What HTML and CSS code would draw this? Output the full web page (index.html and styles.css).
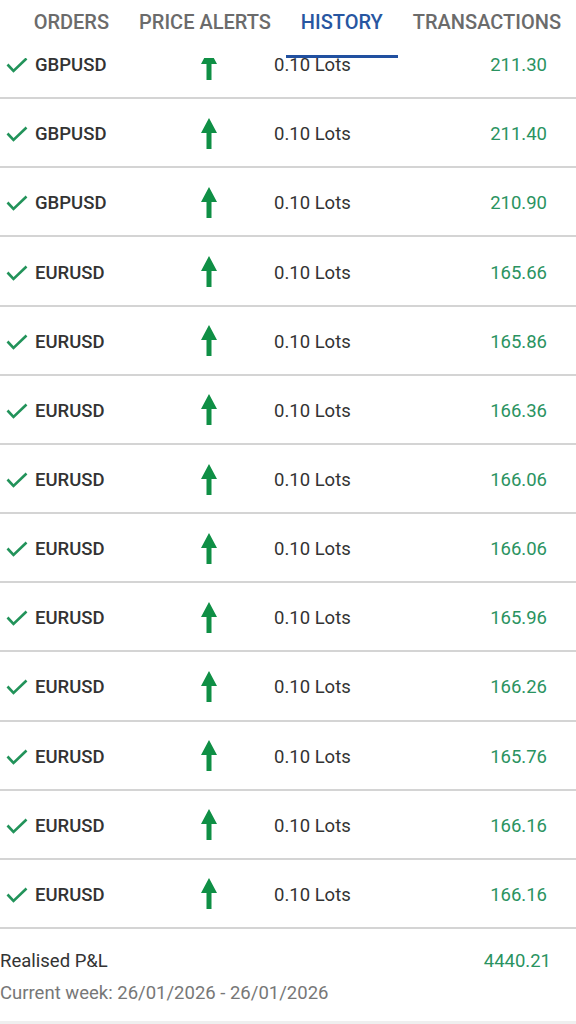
FILE: index.html
```html
<!DOCTYPE html>
<html lang="en">
<head>
  <meta charset="UTF-8" />
  <meta name="viewport" content="width=device-width, initial-scale=1.0"/>
  <title>History</title>
  <link rel="stylesheet" href="styles.css">
</head>
<body>
  <div class="screen">

    <!-- Tabs -->
    <nav class="tabs">
      <a class="tab">ORDERS</a>
      <a class="tab">PRICE ALERTS</a>
      <a class="tab active">HISTORY</a>
      <a class="tab">TRANSACTIONS</a>
    </nav>

    <!-- History list -->
    <div class="list" id="list"></div>

    <!-- Summary -->
    <div class="summary">
      <p class="pl"><span>Realised P&amp;L</span><span class="green">4440.21</span></p>
      <p class="period">Current week: 26/01/2026 - 26/01/2026</p>
    </div>
    <div class="footer-bar"></div>
  </div>

  <script>
    const trades = [
      ["GBPUSD", "211.30"],
      ["GBPUSD", "211.40"],
      ["GBPUSD", "210.90"],
      ["EURUSD", "165.66"],
      ["EURUSD", "165.86"],
      ["EURUSD", "166.36"],
      ["EURUSD", "166.06"],
      ["EURUSD", "166.06"],
      ["EURUSD", "165.96"],
      ["EURUSD", "166.26"],
      ["EURUSD", "165.76"],
      ["EURUSD", "166.16"],
      ["EURUSD", "166.16"]
    ];

    const check = '<svg class="check" width="22" height="16" viewBox="0 0 22 16"><path d="M1.5 7.5 L7.5 14 L20.5 1.5" fill="none" stroke="#22935a" stroke-width="2.6"/></svg>';
    const arrow = '<svg class="arrow" width="18" height="31" viewBox="0 0 18 31"><path d="M9 0 L17 15 L11.5 15 L11.5 31 L6.5 31 L6.5 15 L1 15 Z" fill="#0f8f45"/></svg>';

    const list = document.getElementById("list");
    trades.forEach(t => {
      const row = document.createElement("div");
      row.className = "row";
      row.innerHTML =
        '<div class="symbol">' + check + '<span>' + t[0] + '</span></div>' +
        '<div class="dir">' + arrow + '</div>' +
        '<div class="lots">0.10 Lots</div>' +
        '<div class="value green">' + t[1] + '</div>';
      list.appendChild(row);
    });
  </script>
</body>
</html>
```

FILE: styles.css
```css
body {
  margin: 0;
  font-family: Roboto, "Liberation Sans", sans-serif;
  background-color: white;
  color: #333;
}
.screen {
  position: relative;
  width: 576px;
  height: 1024px;
  overflow: hidden;
}
.tabs {
  position: absolute;
  top: 0;
  left: 0;
  right: 0;
  height: 58px;
  background-color: white;
  display: flex;
  justify-content: flex-end;
  z-index: 2;
}
.tab {
  flex-shrink: 0;
  box-sizing: border-box;
  height: 58px;
  padding: 9px 15px 0;
  line-height: 26px;
  font-size: 20px;
  font-weight: 500;
  color: #6b6b6b;
  white-space: nowrap;
}
.tab.active {
  color: #2756a1;
  border-bottom: 3px solid #2150a0;
}
.list {
  padding-top: 30px;
}
.row {
  box-sizing: border-box;
  height: 69.17px;
  display: grid;
  grid-template-columns: 179px 48px 1fr auto;
  align-items: center;
  padding: 3px 29px 0 6px;
  border-bottom: 2px solid #d4d4d4;
  font-size: 18.5px;
}
.symbol {
  display: flex;
  align-items: center;
  gap: 7px;
  font-weight: 500;
  color: #333;
}
.dir {
  display: flex;
  justify-content: center;
}
.arrow {
  margin-top: -2px;
}
.lots {
  padding-left: 41px;
  color: #333;
}
.green {
  color: #2a9361;
}
.summary {
  padding: 16px 25px 0 0;
  font-size: 18.5px;
}
.summary p {
  margin: 0;
}
.pl {
  display: flex;
  justify-content: space-between;
  line-height: 32px;
}
.period {
  color: #777;
  line-height: 32px;
}
.footer-bar {
  position: absolute;
  left: 0;
  right: 0;
  bottom: 0;
  height: 3px;
  background-color: #efefef;
}
```
